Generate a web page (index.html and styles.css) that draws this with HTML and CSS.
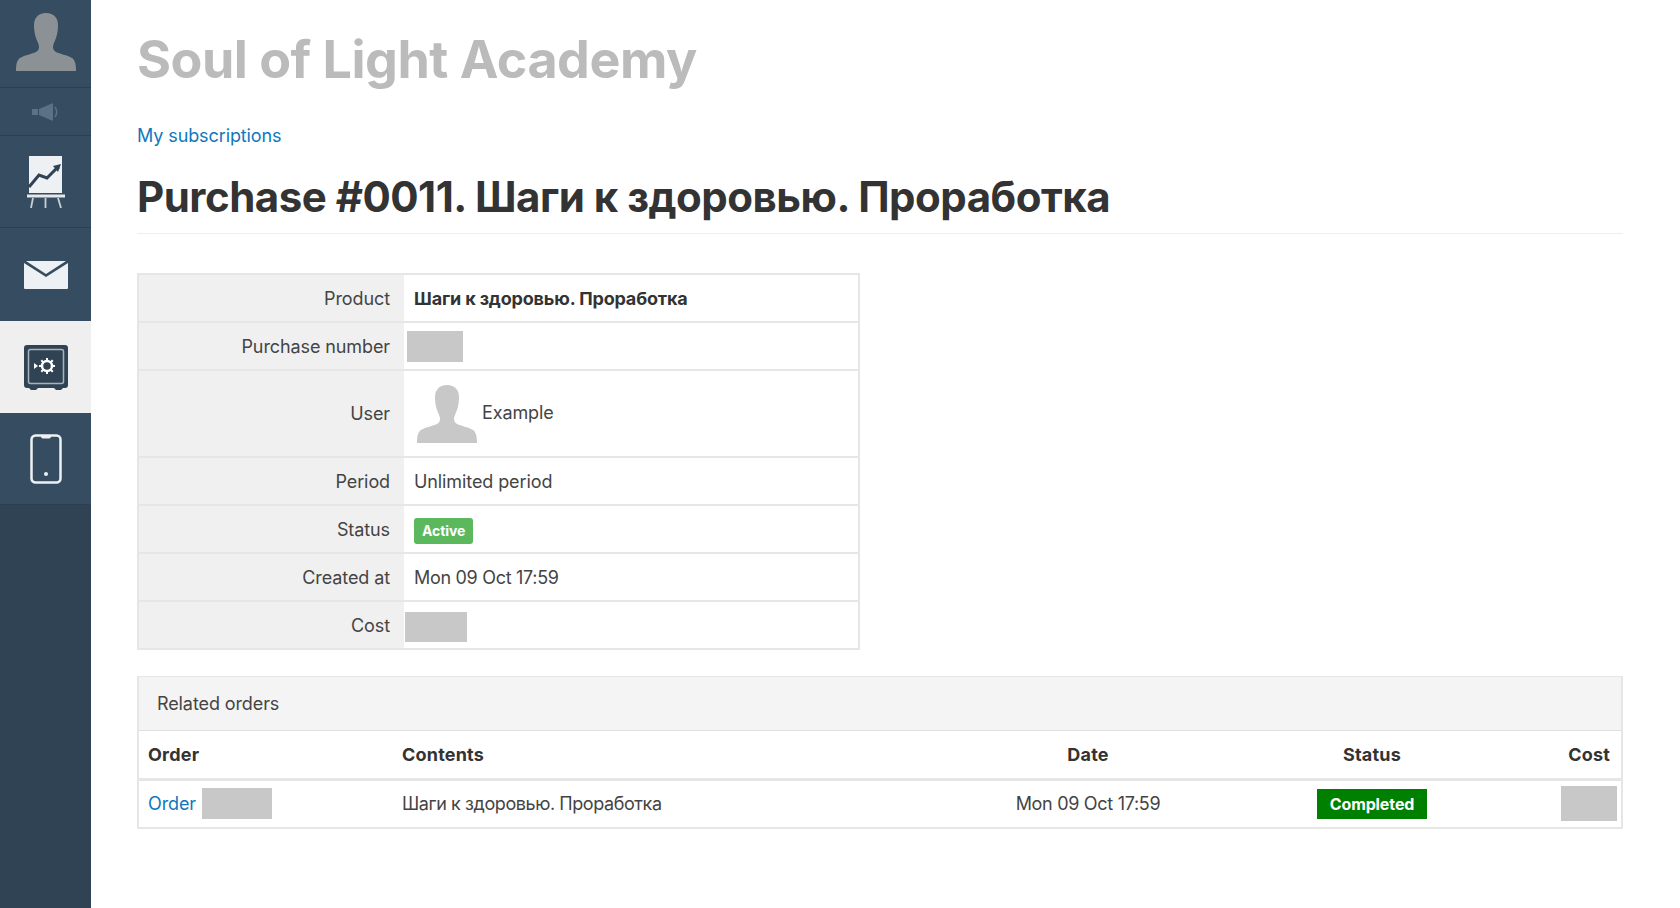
FILE: index.html
```html
<!DOCTYPE html>
<html lang="en">
<head>
<meta charset="utf-8">
<title>Purchase #0011</title>
<link rel="stylesheet" href="styles.css">
</head>
<body>
<div class="app">
  <nav class="sidebar">
    <a class="nav-item nav-avatar">
      <svg class="ico-avatar" viewBox="0 0 60 58"><path class="sil" d="M30 0c-8 0-12 5-12 12 0 4 .5 9 2 13 1 3 3 6 3 9 0 2-1 4-3 5-4 2-11 3-16 6-3 2-4 6-4 13h60c0-7-1-11-4-13-5-3-12-4-16-6-2-1-3-3-3-5 0-3 2-6 3-9 1.500-4 2-9 2-13 0-7-4-12-12-12z"/></svg>
    </a>
    <a class="nav-item nav-sound">
      <svg class="ico-sound" viewBox="0 0 28 18"><path d="M0 6h6v6H0zM7 6l14-6v18L7 12z"/><path class="wave" d="M23 4c2 3 2 7 0 10"/></svg>
    </a>
    <a class="nav-item nav-large">
      <svg class="ico-chart" viewBox="0 0 38 52"><path class="fill-light" d="M2 0h33v37H2z"/><path class="chart-line" d="M2 31l10-12 8 3 9-9 3-2"/><path class="chart-head" d="M34 8l-8 2 5 6z"/><path class="easel" d="M0 40h38"/><path class="easel-legs" d="M6 42l-2 10M18.500 42v10M31 42l3 10"/></svg>
    </a>
    <a class="nav-item nav-large nav-mail">
      <svg class="ico-mail" viewBox="0 0 46 28"><path class="fill-light" d="M1 2l22 14L45 2v25q0 1-1 1H2q-1 0-1-1z"/><path class="fill-light" d="M3 0h40L23 13z"/></svg>
    </a>
    <a class="nav-item nav-large nav-active">
      <svg class="ico-safe" viewBox="0 0 44 45"><path class="safe-body" d="M3 0h38q3 0 3 3v37q0 3-3 3h-2l-2 2h-5l-2-2H14l-2 2H7l-2-2H3q-3 0-3-3V3q0-3 3-3z"/><rect class="safe-door" x="4.500" y="4.500" width="35" height="34" rx="2"/><circle class="safe-dial" cx="23" cy="21" r="5"/><path class="safe-ticks" d="M23 13v2.500M23 26.500V29M15 21h2.500M28.500 21H31M17.300 15.300l1.800 1.800M27 25l1.800 1.800M17.300 26.700l1.800-1.800M27 17l1.800-1.800"/><path class="safe-arrow" d="M10 18l4 3-4 3z"/></svg>
    </a>
    <a class="nav-item nav-large">
      <svg class="ico-phone" viewBox="0 0 32 50"><rect class="phone-body" x="1.500" y="1.500" width="29" height="47" rx="4"/><path class="phone-notch" d="M11 1.500h10v1q0 2-2 2h-6q-2 0-2-2z"/><circle class="phone-dot" cx="16" cy="40" r="2"/></svg>
    </a>
  </nav>
  <main class="content">
    <h1 class="brand">Soul of Light Academy</h1>
    <p class="crumb"><a href="#">My subscriptions</a></p>
    <h2 class="page-title">Purchase #0011. Шаги к здоровью. Проработка</h2>

    <table class="details">
      <tbody>
        <tr><th>Product</th><td><strong>Шаги к здоровью. Проработка</strong></td></tr>
        <tr><th>Purchase number</th><td class="tight"><span class="mask mask-number"></span></td></tr>
        <tr class="row-user"><th>User</th><td>
          <div class="user">
            <svg class="user-pic" viewBox="0 0 60 58"><path d="M30 0c-8 0-12 5-12 12 0 4 .5 9 2 13 1 3 3 6 3 9 0 2-1 4-3 5-4 2-11 3-16 6-3 2-4 6-4 13h60c0-7-1-11-4-13-5-3-12-4-16-6-2-1-3-3-3-5 0-3 2-6 3-9 1.500-4 2-9 2-13 0-7-4-12-12-12z"/></svg>
            <span>Example</span>
          </div>
        </td></tr>
        <tr><th>Period</th><td>Unlimited period</td></tr>
        <tr><th>Status</th><td><span class="label-active">Active</span></td></tr>
        <tr><th>Created at</th><td class="stamp">Mon 09 Oct 17:59</td></tr>
        <tr><th>Cost</th><td class="tighter"><span class="mask mask-cost"></span></td></tr>
      </tbody>
    </table>

    <section class="panel">
      <div class="panel-heading">Related orders</div>
      <table class="orders">
        <thead>
          <tr>
            <th class="col-order">Order</th>
            <th class="col-contents">Contents</th>
            <th class="col-date">Date</th>
            <th class="col-status">Status</th>
            <th class="col-cost">Cost</th>
          </tr>
        </thead>
        <tbody>
          <tr>
            <td class="col-order"><div class="order-cell"><a href="#">Order</a><span class="mask mask-order"></span></div></td>
            <td class="cyr">Шаги к здоровью. Проработка</td>
            <td class="col-date stamp">Mon 09 Oct 17:59</td>
            <td class="col-status"><span class="label-done">Completed</span></td>
            <td class="col-cost"><span class="mask mask-total"></span></td>
          </tr>
        </tbody>
      </table>
    </section>
  </main>
</div>
</body>
</html>
```

FILE: styles.css
```css
* { box-sizing: border-box; }
html, body { margin: 0; height: 100%; }
body {
  font-family: Inter, "Noto Sans", sans-serif;
  font-size: 18px;
  letter-spacing: -0.1px;
  color: #444;
  background: #fff;
  overflow: hidden;
}
a { color: #0f78bd; text-decoration: none; }
.app { display: flex; height: 908px; }

.sidebar {
  width: 91px;
  flex: none;
  background: #2f4355;
  display: flex;
  flex-direction: column;
}
.nav-item {
  display: flex;
  align-items: center;
  justify-content: center;
  background: #364c60;
  border-bottom: 1px solid #2c3e50;
}
.nav-avatar { height: 88px; }
.nav-sound { height: 48px; }
.nav-large { height: 92px; }
.nav-mail { height: 93px; border-bottom: 0; }
.nav-active { height: 92px; background: #efefef; border-bottom: 0; }
.sil { fill: #8c9196; }
.ico-avatar { width: 60px; height: 58px; margin-top: -4px; }
.ico-sound { width: 28px; height: 18px; fill: #5b7186; }
.ico-sound .wave { fill: none; stroke: #5b7186; stroke-width: 1.500; }
.ico-chart { width: 38px; height: 52px; }
.ico-mail { width: 46px; height: 28px; }
.ico-safe { width: 44px; height: 45px; }
.ico-phone { width: 32px; height: 50px; }
.fill-light { fill: #edf1f3; }
.chart-line { fill: none; stroke: #2f4355; stroke-width: 3; }
.chart-head { fill: #2f4355; }
.easel { fill: none; stroke: #e4e8ea; stroke-width: 3; }
.easel-legs { fill: none; stroke: #c9d0d5; stroke-width: 1.800; }
.safe-body { fill: #2f4355; }
.safe-door { fill: none; stroke: #aab3bb; stroke-width: 1.500; }
.safe-dial { fill: none; stroke: #fff; stroke-width: 2.500; }
.safe-ticks { stroke: #fff; stroke-width: 2; }
.safe-arrow { fill: #fff; }
.phone-body { fill: none; stroke: #edf1f3; stroke-width: 2.500; }
.phone-notch, .phone-dot { fill: #edf1f3; }

.content { flex: 1; padding: 0 57px 0 46px; min-width: 0; }
.brand {
  margin: 0;
  padding-top: 26px;
  height: 118px;
  font-size: 52px;
  line-height: 68px;
  font-weight: 700;
  letter-spacing: -0.5px;
  color: #bbb;
}
.crumb { margin: 0; height: 42px; font-size: 18px; line-height: 36px; }
.page-title {
  margin: 0;
  height: 74px;
  padding-top: 9px;
  border-bottom: 1px solid #eee;
  font-size: 42px;
  line-height: 56px;
  font-weight: 700;
  letter-spacing: -0.5px;
  color: #333;
}

.details {
  margin-top: 39px;
  width: 723px;
  border-collapse: collapse;
  border: 2px solid #e6e6e6;
}
.details th, .details td {
  height: 48px;
  padding: 0 10px;
  border-top: 2px solid #e6e6e6;
  font-size: 18px;
  font-weight: 400;
  vertical-align: middle;
}
.details th {
  width: 266px;
  padding-right: 14px;
  text-align: right;
  background: #f0f0f0;
}
.details .row-user th, .details .row-user td { height: 87px; }
.details strong { font-weight: 700; color: #333; letter-spacing: -0.16px; }
.details td.tight { padding-left: 3px; }
.details td.tighter { padding-left: 1px; }
.details td.stamp { letter-spacing: -0.3px; }
.mask { display: block; background: #c8c8c8; }
.mask-number { width: 56px; height: 31px; }
.mask-cost { width: 62px; height: 30px; margin-top: 3px; }
.user { display: flex; align-items: center; gap: 5px; padding-left: 3px; }
.user span { margin-top: -3px; }
.user-pic { width: 60px; height: 58px; fill: #c8c8c8; }
.label-active {
  display: inline-block;
  padding: 0 8px;
  height: 26px;
  line-height: 26px;
  margin-top: 3px;
  border-radius: 3px;
  background: #5cb85c;
  color: #fff;
  font-size: 14px;
  font-weight: 700;
  vertical-align: middle;
}

.panel {
  margin-top: 26px;
  border: 2px solid #e6e6e6;
  border-width: 1px 2px 2px;
}
.panel-heading {
  height: 54px;
  padding: 0 18px;
  line-height: 54px;
  background: #f4f4f4;
  border-bottom: 1px solid #e0e0e0;
}
.orders { width: 100%; border-collapse: collapse; table-layout: fixed; }
.orders th {
  height: 48px;
  padding: 0 10px;
  font-weight: 700;
  letter-spacing: 0.2px;
  color: #333;
  text-align: left;
  border-bottom: 3px solid #e6e6e6;
}
.orders td { height: 48px; padding: 0 10px; vertical-align: middle; }
.orders th.col-order, .orders td.col-order { padding-left: 9px; }
.orders td.cyr { letter-spacing: -0.42px; }
.orders td.stamp { letter-spacing: -0.3px; }
.col-order { width: 253px; }
.col-contents { width: 551px; }
.col-date { width: 290px; text-align: center; }
.orders th.col-date, .orders th.col-status { text-align: center; }
.col-status { width: 278px; text-align: center; }
.orders .col-cost { text-align: right; padding: 0 4px 0 0; }
.orders th.col-cost { text-align: right; padding-right: 11px; }
.order-cell { display: flex; align-items: center; gap: 6px; }
.mask-order { width: 70px; height: 31px; }
.mask-total { width: 56px; height: 35px; margin-left: auto; }
.label-done {
  display: inline-block;
  height: 30px;
  line-height: 30px;
  width: 110px;
  background: #008000;
  color: #fff;
  font-size: 16px;
  font-weight: 700;
  text-align: center;
  vertical-align: middle;
}
```
